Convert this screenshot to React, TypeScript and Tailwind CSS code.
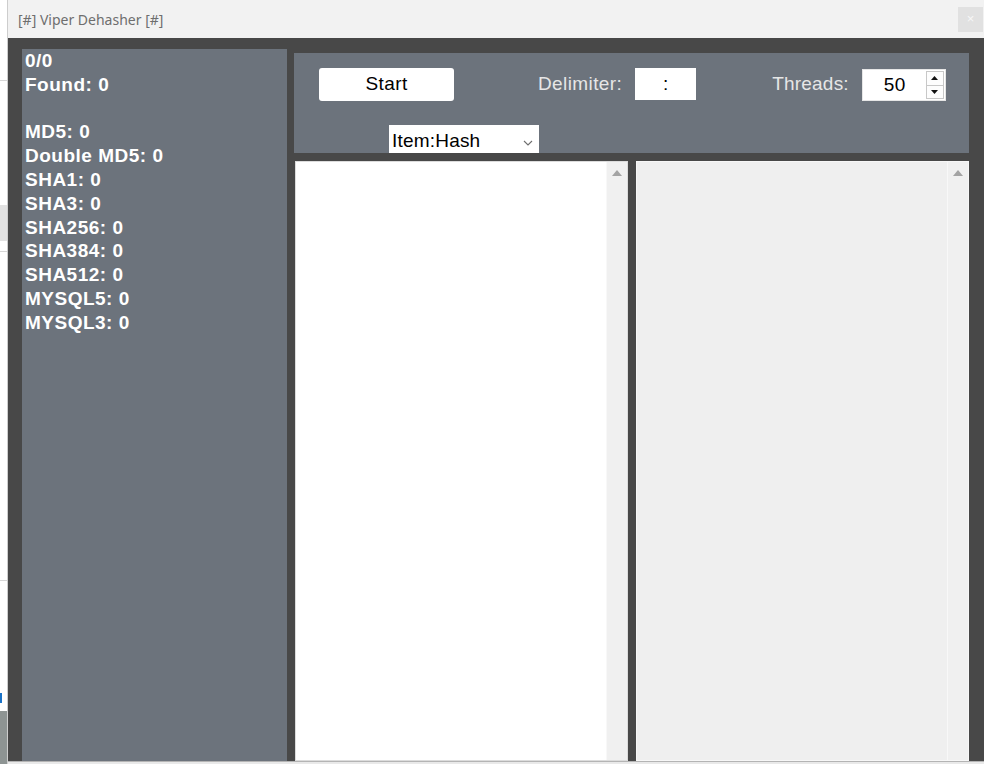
import React from 'react'

const counters = [
  'MD5: 0',
  'Double MD5: 0',
  'SHA1: 0',
  'SHA3: 0',
  'SHA256: 0',
  'SHA384: 0',
  'SHA512: 0',
  'MYSQL5: 0',
  'MYSQL3: 0',
]

const ArrowUp = ({ className = '' }: { className?: string }) => (
  <svg width="10" height="6" viewBox="0 0 10 6" className={className}>
    <path d="M0 6 L5 0 L10 6 Z" fill="#a3a3a3" />
  </svg>
)

const SpinArrow = ({ down }: { down?: boolean }) => (
  <svg width="7" height="4" viewBox="0 0 7 4">
    <path d={down ? 'M0 0 L7 0 L3.5 4 Z' : 'M0 4 L3.5 0 L7 4 Z'} fill="#111" />
  </svg>
)

// textbox with a vertical scrollbar, like the WinForms multiline box
const LogBox = ({ readOnly }: { readOnly?: boolean }) => (
  <div
    className={`flex h-full w-[333px] border ${
      readOnly ? 'border-[#f7f7f7] bg-[#efefef]' : 'border-[#dcdcdc] bg-white'
    }`}
  >
    <div className="flex-1" />
    <div className="flex w-[21px] flex-col items-center border-l border-[#f8f8f8] bg-[#f0f0f0] pt-[8px]">
      <ArrowUp />
    </div>
  </div>
)

const App: React.FC = () => {
  return (
    <div className="flex h-[764px] w-[984px] overflow-hidden bg-white font-['Liberation_Sans',Arial,sans-serif]">
      {/* bit of whatever window sits behind */}
      <div className="flex w-[7px] flex-col bg-white">
        <div className="h-[81px] border-b border-[#d6d6d6]" />
        <div className="mt-[124px] h-[36px] bg-[#e1e1e1]" />
        <div className="mt-[10px] h-[330px] border-y border-[#d6d6d6]" />
        <div className="mt-[112px] h-[10px] w-[2px] bg-[#1a73c8]" />
        <div className="mt-[8px] flex-1 bg-[#8e9493]" />
      </div>

      <div className="flex w-[977px] flex-col border-l border-[#cdcdcd]">
        <div className="flex h-[38px] items-center justify-between bg-[#f2f2f2] pl-[10px] pr-[1px]">
          <span className="font-['Noto_Sans',sans-serif] text-[14px] text-[#6e6e6e]">[#] Viper Dehasher [#]</span>
          <div className="flex h-[25px] w-[25px] items-center justify-center bg-[#e1e1e1] pb-[1px] text-[13px] leading-none text-[#f7f7f7]">
            ×
          </div>
        </div>

        <div className="flex h-[723px] gap-[7px] bg-[#484848] pl-[14px] pt-[11px]">
          <div className="w-[265px] bg-[#6c737c] pl-[3px] text-[19px] font-bold leading-[23.8px] tracking-[0.5px] text-white">
            <div>0/0</div>
            <div>Found: 0</div>
            <div>&nbsp;</div>
            {counters.map((c) => (
              <div key={c}>{c}</div>
            ))}
          </div>

          <div className="flex w-[675px] flex-col pt-[4px]">
            <div className="flex h-[100px] flex-col overflow-hidden bg-[#6c737c]">
              <div className="flex items-center pt-[14px] text-[19px] tracking-[0.4px]">
                <div className="ml-[25px] flex h-[33px] w-[135px] items-center justify-center rounded-[3px] bg-white text-black">
                  Start
                </div>
                <span className="ml-[84px] text-[#e6e6e6]">Delimiter:</span>
                <div className="ml-[13px] flex h-[32px] w-[61px] items-center justify-center bg-white text-black">
                  :
                </div>
                <span className="ml-[76px] tracking-[0.2px] text-[#e6e6e6]">Threads:</span>
                <div className="ml-[13px] mt-[2px] flex h-[32px] w-[84px] items-center border border-[#e6e6e6] bg-white">
                  <span className="flex-1 pl-[1px] text-center text-black">50</span>
                  <div className="mr-[1px] flex h-[28px] w-[18px] flex-col">
                    <div className="flex flex-1 items-center justify-center border border-[#c8c8c8] bg-[#fdfdfd]">
                      <SpinArrow />
                    </div>
                    <div className="flex flex-1 items-center justify-center border border-t-0 border-[#c8c8c8] bg-[#fdfdfd]">
                      <SpinArrow down />
                    </div>
                  </div>
                </div>
              </div>
              <div className="ml-[95px] mt-[24px] flex h-[30px] w-[150px] shrink-0 items-start bg-white pl-[3px] pt-[3px] text-[19px] leading-[26px] tracking-[0.2px] text-black">
                <span className="flex-1">Item:Hash</span>
                <svg width="10" height="6" viewBox="0 0 10 6" className="mr-[6px] mt-[12px]">
                  <path d="M1 1 L5 5 L9 1" stroke="#6e6e6e" strokeWidth="1.1" fill="none" />
                </svg>
              </div>
            </div>

            <div className="mt-[8px] flex flex-1 gap-[8px] pl-[1px]">
              <LogBox />
              <LogBox readOnly />
            </div>
          </div>
        </div>
        <div className="h-[1px] bg-[#b4b4b4]" />
        <div className="flex-1 bg-[#e9e9e9]" />
      </div>
    </div>
  )
}

export default App
